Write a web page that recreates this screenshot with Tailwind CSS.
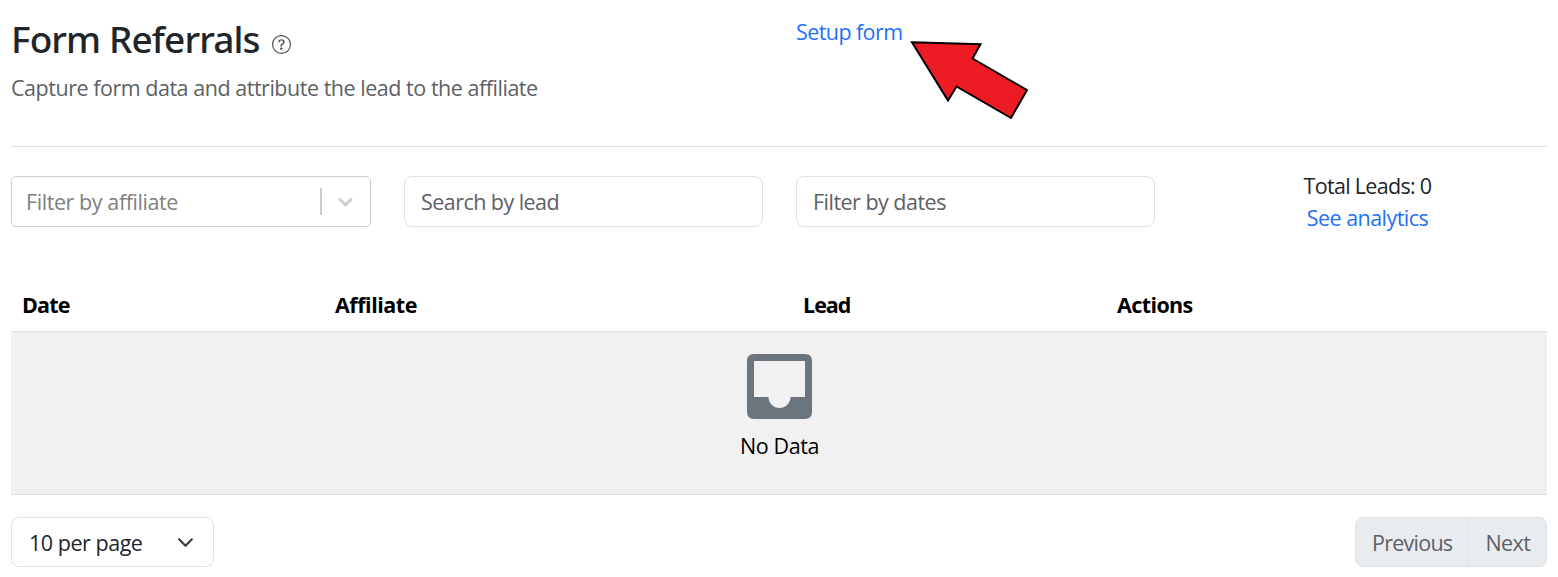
<!DOCTYPE html>
<html lang="en">
<head>
<meta charset="utf-8">
<title>Form Referrals</title>
<script src="https://cdn.jsdelivr.net/npm/@tailwindcss/browser@4"></script>
</head>
<body class="bg-white font-['Open_Sans','Noto_Sans',sans-serif] text-[21.5px] leading-[33px] tracking-[-0.47px] text-[#212529]">
<main class="relative h-[577px] w-[1558px] overflow-hidden pl-[11px] pr-[11px]">
  <header class="flex h-[147px] border-b border-[#dedfe0]">
    <div class="w-[785px] pt-[12px]">
      <div class="flex h-[52px] items-center">
        <h1 class="w-[248px] whitespace-nowrap font-['Noto_Sans'] text-[37px] font-medium tracking-[-0.9px]"><span>Form Referrals</span></h1>
        <svg class="ml-[13px] mt-[12px] size-[19px]" viewBox="0 0 16 16" fill="#495057"><path d="M8 15A7 7 0 1 1 8 1a7 7 0 0 1 0 14m0 1A8 8 0 1 0 8 0a8 8 0 0 0 0 16"/><path d="M5.255 5.786a.237.237 0 0 0 .241.247h.825c.138 0 .248-.113.266-.25.09-.656.54-1.134 1.342-1.134.686 0 1.314.343 1.314 1.168 0 .635-.374.927-.965 1.371-.673.489-1.206 1.06-1.168 1.987l.003.217a.25.25 0 0 0 .25.246h.811a.25.25 0 0 0 .25-.25v-.105c0-.718.273-.927 1.01-1.486.609-.463 1.244-.977 1.244-2.056 0-1.511-1.276-2.241-2.673-2.241-1.267 0-2.655.59-2.75 2.286m1.557 5.763c0 .533.425.927 1.01.927.609 0 1.028-.394 1.028-.927 0-.552-.42-.94-1.029-.94-.584 0-1.009.388-1.009.94"/></svg>
      </div>
      <p class="mt-[7px] text-[#5d6165]"><span>Capture form data and attribute the lead to the affiliate</span></p>
    </div>
    <a class="pt-[15px] tracking-[-0.58px] text-[#1f6ffb]"><span>Setup form</span></a>
  </header>
  <svg class="absolute left-[905px] top-[36px] h-[90px] w-[130px]" viewBox="905 36 130 90"><path d="M912 42.300 980.500 44.300 972.500 58.500 1027 90 1011 118 956.500 86.500 948 100.500Z" fill="#ed1c24" stroke="#000" stroke-width="2"/></svg>

  <section class="flex h-[132px] pt-[29px]">
    <div class="flex h-[51px] w-[360px] items-center rounded-[5px] border border-[#ccc] pl-[14px] tracking-[-0.42px] text-[#808080]">
      <span>Filter by affiliate</span>
      <div class="ml-auto h-[27px] w-[2px] bg-[#ccc]"></div>
      <svg class="ml-[12px] mr-[13px] size-[23px]" viewBox="0 0 20 20" fill="#ccc" stroke="#ccc" stroke-width="0.5"><path d="M4.516 7.548c0.436-0.446 1.043-0.481 1.576 0l3.908 3.747 3.908-3.747c0.533-0.481 1.141-0.446 1.574 0 0.436 0.445 0.408 1.197 0 1.615-0.406 0.418-4.695 4.502-4.695 4.502-0.217 0.223-0.502 0.335-0.787 0.335s-0.570-0.112-0.789-0.335c0 0-4.287-4.084-4.695-4.502s-0.436-1.170 0-1.615z"/></svg>
    </div>
    <div class="ml-[33px] flex h-[51px] w-[359px] items-center rounded-[8px] border border-[#dee2e6] pl-[16px] tracking-[-0.55px] text-[#5d6165]"><span>Search by lead</span></div>
    <div class="ml-[33px] flex h-[51px] w-[359px] items-center rounded-[8px] border border-[#dee2e6] pl-[16px] tracking-[-0.52px] text-[#5d6165]"><span>Filter by dates</span></div>
    <div class="-mt-[6px] ml-[33px] flex w-[359px] flex-col items-center leading-[32px]">
      <div class="tracking-[-0.7px]"><span>Total Leads: 0</span></div>
      <a class="tracking-[-0.55px] text-[#1f6ffb]"><span>See analytics</span></a>
    </div>
  </section>

  <section>
    <div class="flex h-[53px] items-center border-b border-[#dedfe0] pb-px pl-[11px] font-bold text-black">
      <div class="w-[313px] tracking-[-0.85px]"><span>Date</span></div>
      <div class="w-[468px]"><span>Affiliate</span></div>
      <div class="w-[314px] tracking-[-1px]"><span>Lead</span></div>
      <div class="tracking-[-0.6px]"><span>Actions</span></div>
    </div>
    <div class="flex h-[163px] flex-col items-center border-b border-[#dedfe0] bg-[#f1f1f1] pt-[21px] text-black">
      <svg class="size-[67px]" viewBox="0 0 67 67"><path fill="#6c757d" fill-rule="evenodd" d="M8 1H59Q66 1 66 8V59Q66 66 59 66H8Q1 66 1 59V8Q1 1 8 1ZM8 8V44H22.500A11 11 0 0 0 44.500 44H59V8Z"/></svg>
      <div class="mt-[9px] pl-px tracking-[-0.4px]"><span>No Data</span></div>
    </div>
  </section>

  <footer class="flex justify-between pt-[22px]">
    <div class="flex h-[50px] w-[203px] items-center rounded-[8px] border border-[#dee2e6] pl-[17px] pr-[19px]">
      <span>10 per page</span>
      <svg class="ml-auto size-[17px]" viewBox="0 0 16 16" fill="none" stroke="#343a40" stroke-width="2" stroke-linecap="round" stroke-linejoin="round"><path d="m2 5 6 6 6-6"/></svg>
    </div>
    <div class="flex h-[50px] items-center rounded-[8px] border border-[#dee2e6] bg-[#e9ecef] text-[#5d6165]">
      <div class="flex h-full w-[113px] items-center border-r border-[#dee2e6] pl-[16px] tracking-[-0.75px]"><span>Previous</span></div>
      <div class="w-[77px] pl-[16.500px] tracking-[-0.6px]"><span>Next</span></div>
    </div>
  </footer>
</main>
</body>
</html>
